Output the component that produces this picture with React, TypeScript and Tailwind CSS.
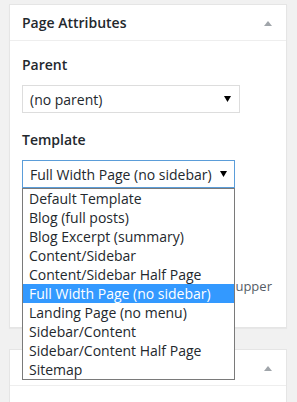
import React from "react";

const templates = [
  "Default Template",
  "Blog (full posts)",
  "Blog Excerpt (summary)",
  "Content/Sidebar",
  "Content/Sidebar Half Page",
  "Full Width Page (no sidebar)",
  "Landing Page (no menu)",
  "Sidebar/Content",
  "Sidebar/Content Half Page",
  "Sitemap",
];

const Caret = () => (
  <svg width="8" height="6" viewBox="0 0 8 6" className="fill-[#a0a5aa]">
    <path d="M0 6 L4 1 L8 6 Z" />
  </svg>
);

const SelectArrow = () => (
  <svg width="7" height="6" viewBox="0 0 7 6" className="fill-black">
    <path d="M0 0 H7 L3.5 6 Z" />
  </svg>
);

const App = () => {
  return (
    <div
      className="h-[402px] overflow-hidden bg-[#f1f1f1] pt-[4px] pl-[9px] pr-[10px] text-[#23282d]"
      style={{ fontFamily: '"Open Sans", "Noto Sans", sans-serif' }}
    >
      {/* Page Attributes box */}
      <div className="bg-white border border-[#e5e5e5] shadow-[0_1px_1px_rgba(0,0,0,0.04)]">
        <div className="flex items-center justify-between h-[36px] pl-[12px] pr-[14px] border-b border-[#eeeeee]">
          <h2 className="text-[14px] font-semibold leading-none">Page Attributes</h2>
          <Caret />
        </div>
        <div className="px-[12px] pt-[14px] pb-[12px]">
          <p className="text-[14px] font-semibold leading-[19px]">Parent</p>
          <div className="mt-[11px] flex items-center justify-between w-[218px] h-[28px] border border-[#dddddd] pl-[7px] pr-[8px] text-[14px]">
            <span>(no parent)</span>
            <SelectArrow />
          </div>
          <p className="mt-[17px] text-[14px] font-semibold leading-[19px]">Template</p>
          <div className="relative mt-[11px]">
            <div className="flex items-center justify-between w-[213px] h-[28px] border border-[#5b9dd9] pl-[7px] pr-[7px] text-[14px]">
              <span>Full Width Page (no sidebar)</span>
              <SelectArrow />
            </div>
            <ul className="absolute z-10 top-[28px] left-0 w-[213px] bg-white border border-[#7a7a7a] text-[14px] leading-[19px]">
              {templates.map((t) => (
                <li
                  key={t}
                  className={
                    t === "Full Width Page (no sidebar)"
                      ? "pl-[6px] bg-[#3399ff] text-white"
                      : "pl-[6px] text-[#23282d]"
                  }
                >
                  {t}
                </li>
              ))}
            </ul>
          </div>
          <div className="h-[89px]" />
          <p className="text-[13px] leading-[19px] text-[#555d66]">
            Need help? Use the Help tab in the upper right of your screen.
          </p>
        </div>
      </div>

      {/* next box */}
      <div className="mt-[21px] bg-white border border-[#e5e5e5] h-[80px]">
        <div className="flex items-center justify-end h-[36px] pr-[14px] border-b border-[#eeeeee]">
          <Caret />
        </div>
      </div>
    </div>
  );
};

export default App;
